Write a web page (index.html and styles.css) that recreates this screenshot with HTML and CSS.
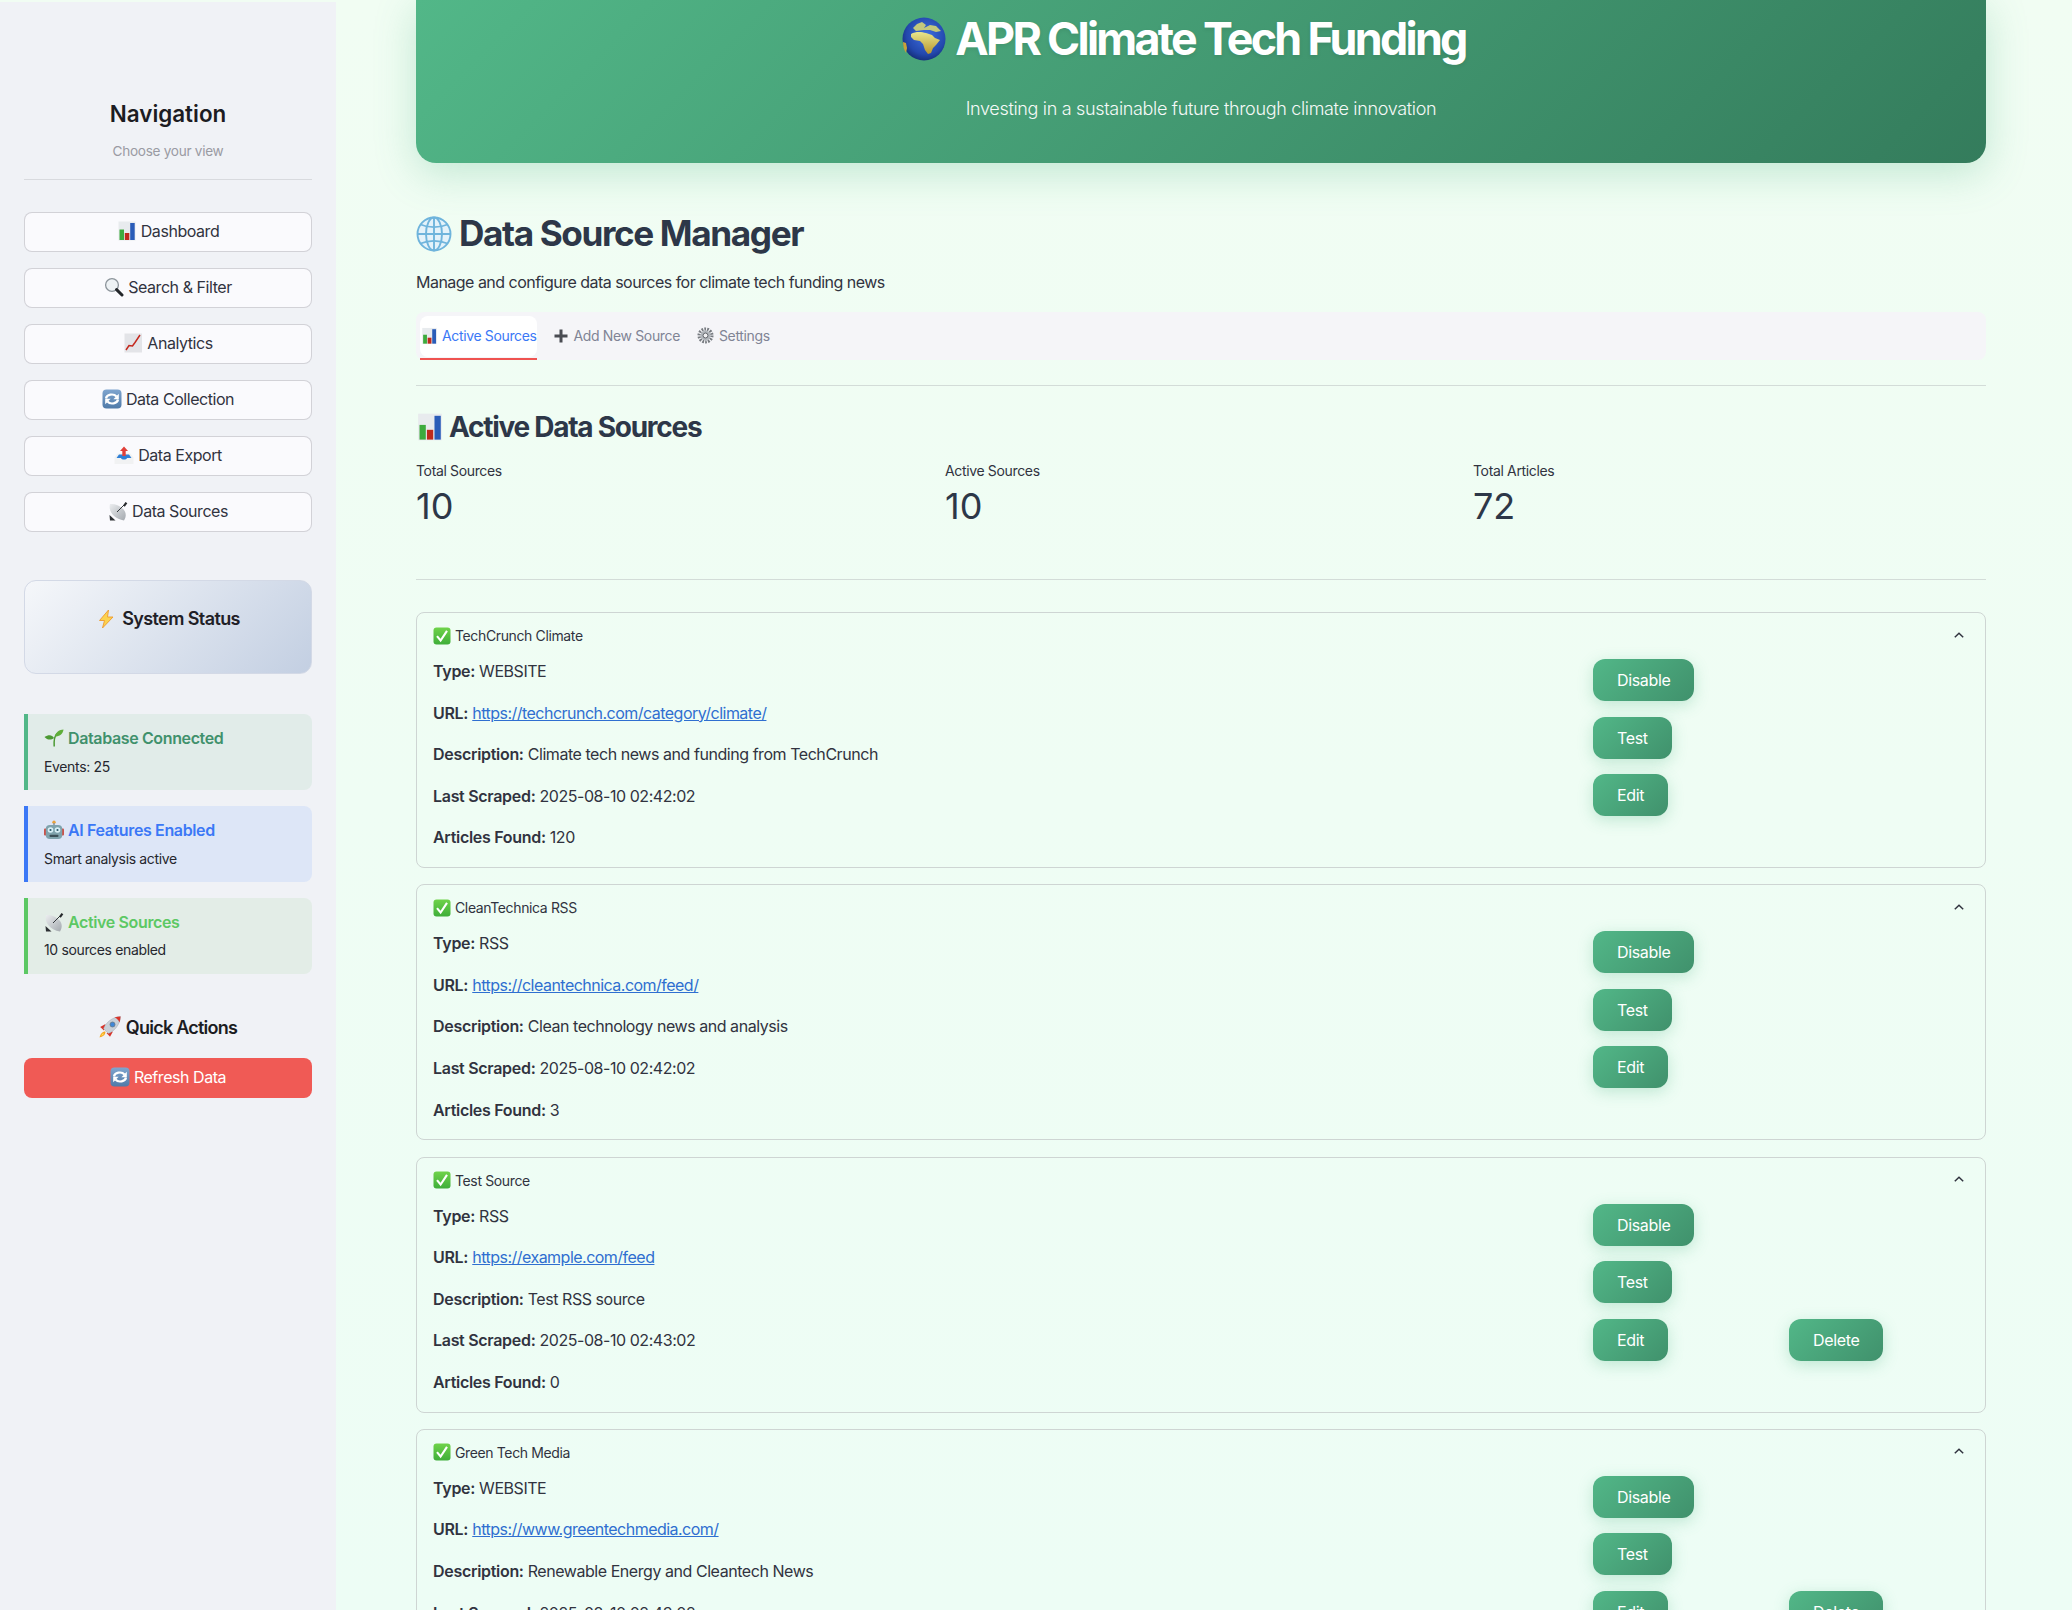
FILE: index.html
```html
<!DOCTYPE html>
<html lang="en">
<head>
<meta charset="utf-8">
<title>APR Climate Tech Funding</title>
<link rel="stylesheet" href="styles.css">
</head>
<body>
<svg class="defs" aria-hidden="true">
  <defs>
    <radialGradient id="sea" cx="0.55" cy="0.4" r="0.65"><stop offset="0" stop-color="#3f6fe0"/><stop offset="0.7" stop-color="#2348ad"/><stop offset="1" stop-color="#122a70"/></radialGradient>
    <linearGradient id="land" x1="0.5" y1="0" x2="0.5" y2="1"><stop offset="0" stop-color="#e8e68c"/><stop offset="1" stop-color="#b8962e"/></linearGradient>
    <linearGradient id="rf" x1="0" y1="0" x2="0" y2="1"><stop offset="0" stop-color="#7fa5cf"/><stop offset="1" stop-color="#4f7aa8"/></linearGradient>
    <linearGradient id="dish" x1="0" y1="0" x2="1" y2="1"><stop offset="0" stop-color="#eceef0"/><stop offset="1" stop-color="#a3a8ae"/></linearGradient>
    <linearGradient id="ok" x1="0" y1="0" x2="0" y2="1"><stop offset="0" stop-color="#6fd34a"/><stop offset="1" stop-color="#3fae3a"/></linearGradient>
  </defs>
  <symbol id="i-chart" viewBox="0 0 20 20"><rect x="1.500" y="0.500" width="17" height="19" fill="#e8ebee"/><rect x="2.500" y="8.500" width="4.500" height="10.500" fill="#3dab3d"/><rect x="7.800" y="12" width="4.500" height="7" fill="#bf2a1c"/><rect x="13.200" y="2" width="4.500" height="17" fill="#2a5cb8"/></symbol>
  <symbol id="i-search" viewBox="0 0 20 20"><circle cx="8" cy="8" r="6.400" fill="#eef2f5" stroke="#8c949b" stroke-width="1.300"/><line x1="12.600" y1="12.600" x2="18" y2="18" stroke="#23262a" stroke-width="3" stroke-linecap="round"/></symbol>
  <symbol id="i-up" viewBox="0 0 20 20"><rect x="1.500" y="0.500" width="17.500" height="19" fill="#e3e4e8"/><polyline points="3,17 6,12.500 9.500,13 12,9.500 17,2" fill="none" stroke="#c4281e" stroke-width="1.500"/></symbol>
  <symbol id="i-refresh" viewBox="0 0 20 20"><rect x="0.500" y="0.500" width="19" height="19" rx="4" fill="url(#rf)"/><path d="M4 9.500C4.500 5.500 11.500 4 14.500 7.500" fill="none" stroke="#fff" stroke-width="2.200"/><path d="M16.800 4.800v5.400h-5.400z" fill="#fff"/><path d="M16 10.500C15.500 14.500 8.500 16 5.500 12.500" fill="none" stroke="#fff" stroke-width="2.200"/><path d="M3.200 15.200v-5.400h5.400z" fill="#fff"/></symbol>
  <symbol id="i-out" viewBox="0 0 20 20"><path d="M0.500 12.500L3.500 8.500h13l3 4v6.500h-19z" fill="#f1f2f3"/><path d="M2.500 13L5 9.500h10l2.500 3.500h-4.500c-.5 2-5.500 2-6 0z" fill="#2f7fd6"/><path d="M10 1.500L14 6h-2.300v5h-3.400v-5h-2.300z" fill="#e0403a"/></symbol>
  <symbol id="i-sat" viewBox="0 0 20 20"><path d="M1.500 14l6 5.500H2z" fill="#2c2f33"/><path d="M2 3C0 10 6 18 16 19.500 19 15 18 10 14 7 10 3.500 6 2.500 2 3z" fill="url(#dish)"/><path d="M9 11L16 4" stroke="#33373b" stroke-width="1"/><path d="M15 4.500l2.500-3.500 1.800 1.300-2.500 3.500z" fill="#26292c"/></symbol>
  <symbol id="i-bolt" viewBox="0 0 20 20"><path d="M12.500 1L3.500 11.500h5L6.500 19l10.500-11h-5.500z" fill="#fbd24e" stroke="#ee9a2e" stroke-width="0.900" stroke-linejoin="round"/></symbol>
  <symbol id="i-seed" viewBox="0 0 20 20"><path d="M10.200 18.500C9.800 13 10.500 8 13 5.500" fill="none" stroke="#4c9a34" stroke-width="1.500"/><path d="M11 8.500C12 3.500 15.500 2 19.500 1.500 19 6 15.500 8.500 11 8.500z" fill="#5fae3a"/><path d="M10 10C8 6.500 4.500 6.500 0.500 9 3 12 7 12.500 10 10z" fill="#4c9a34"/></symbol>
  <symbol id="i-robot" viewBox="0 0 20 20"><circle cx="10" cy="2.200" r="1.700" fill="#e9a23b"/><rect x="9.200" y="3" width="1.600" height="3" fill="#8d989f"/><rect x="0" y="8.500" width="3" height="7" rx="1" fill="#c9524a"/><rect x="17" y="8.500" width="3" height="7" rx="1" fill="#c9524a"/><rect x="1.800" y="5" width="16.400" height="14" rx="4" fill="#7fa3ad"/><circle cx="6.500" cy="10" r="2.800" fill="#d8f0f7"/><circle cx="13.500" cy="10" r="2.800" fill="#d8f0f7"/><circle cx="6.500" cy="10" r="1.100" fill="#2d5a6a"/><circle cx="13.500" cy="10" r="1.100" fill="#2d5a6a"/><rect x="5.500" y="14.800" width="9" height="2.200" rx="1" fill="#3c5058"/></symbol>
  <symbol id="i-rocket" viewBox="0 0 22 22"><path d="M6.500 15.500C3 15.500 1.500 18 .5 21.500 4 20.500 6.500 19 6.500 15.500z" fill="#f6a623"/><path d="M4.800 17.200C3.300 17.300 2.500 18.500 2.200 19.800 3.500 19.500 4.700 18.700 4.800 17.200z" fill="#fde35a"/><path d="M6.500 8L1.200 11 5 14.500z" fill="#d8342a"/><path d="M14 15.500L11 20.800 7.500 17z" fill="#d8342a"/><path d="M4.500 12.500L9.500 17.500C15.500 15 20.800 9 21.500 .5 13 1.200 7 6.500 4.500 12.500z" fill="#c9d0d8" stroke="#8f98a2" stroke-width="0.400"/><path d="M15.500 1.500C18 2.500 19.500 4 20.500 6.500 21.200 4.500 21.400 2.500 21.500 .5 19.500 .6 17.500 .9 15.500 1.500z" fill="#d8342a"/><circle cx="13.500" cy="8.500" r="2.500" fill="#3f87d8" stroke="#6a7782" stroke-width="0.800"/></symbol>
  <symbol id="i-check" viewBox="0 0 18 18"><rect x="0.500" y="0.500" width="17" height="17" rx="3" fill="url(#ok)"/><path d="M4 9.200l3.600 4.300L14 3.800" fill="none" stroke="#fff" stroke-width="2.100"/></symbol>
  <symbol id="i-earth" viewBox="0 0 44 44"><circle cx="22" cy="22" r="21.500" fill="url(#sea)"/><path d="M11 11L15 7 20 5 24 8 22 11 28 8 34 9 39 14 34 15 28 13 22 13 14 14z" fill="#c4c87c"/><path d="M9 17C14 14 20 15 24 16L30 18 33 21 38 23 34 28 31 31 29 36 26 37 23 33 21 27 18 24 12 23 9 20z" fill="url(#land)"/><path d="M1 25L4 26 5 31 4 36C2 33 1 29 1 25z" fill="#c8a23a"/></symbol>
  <symbol id="i-globe" viewBox="0 0 36 36" fill="none" stroke="#6fb4dc" stroke-width="1.900"><circle cx="18" cy="18" r="16.500" fill="#e4f2fa"/><ellipse cx="18" cy="18" rx="8" ry="16.500"/><line x1="18" y1="1.500" x2="18" y2="34.500"/><line x1="1.500" y1="18" x2="34.500" y2="18"/><path d="M4.500 8.500c8 3.500 19 3.500 27 0M4.500 27.500c8-3.500 19-3.500 27 0"/></symbol>
  <symbol id="i-plus" viewBox="0 0 14 14"><path d="M5.500 0.500h3v5h5v3h-5v5h-3v-5h-5v-3h5z" fill="#4a4c52"/></symbol>
  <symbol id="i-gear" viewBox="0 0 18 18"><circle cx="9" cy="9" r="6.800" fill="none" stroke="#777b80" stroke-width="3.400" stroke-dasharray="1.800 1.200"/><circle cx="9" cy="9" r="5.200" fill="#b0b5ba"/><circle cx="9" cy="9" r="2.600" fill="#f0f1f3" stroke="#5b5f64" stroke-width="1"/></symbol>
  <symbol id="i-chev" viewBox="0 0 10 6"><polyline points="0.800,5.200 5,1.200 9.200,5.200" fill="none" stroke="#31333f" stroke-width="1.500"/></symbol>
</svg>

<div class="app">
  <aside class="sidebar">
    <h2 class="nav-title">Navigation</h2>
    <p class="nav-sub">Choose your view</p>
    <hr class="side-rule">
    <nav class="nav-list">
      <button class="nav-btn"><svg class="ic"><use href="#i-chart"/></svg>Dashboard</button>
      <button class="nav-btn"><svg class="ic"><use href="#i-search"/></svg>Search &amp; Filter</button>
      <button class="nav-btn"><svg class="ic"><use href="#i-up"/></svg>Analytics</button>
      <button class="nav-btn"><svg class="ic"><use href="#i-refresh"/></svg>Data Collection</button>
      <button class="nav-btn"><svg class="ic"><use href="#i-out"/></svg>Data Export</button>
      <button class="nav-btn"><svg class="ic"><use href="#i-sat"/></svg>Data Sources</button>
    </nav>
    <div class="system-box"><svg class="ic"><use href="#i-bolt"/></svg>System Status</div>
    <div class="status status-green">
      <div class="status-title"><svg class="ic"><use href="#i-seed"/></svg>Database Connected</div>
      <div class="status-text">Events: 25</div>
    </div>
    <div class="status status-blue">
      <div class="status-title"><svg class="ic"><use href="#i-robot"/></svg>AI Features Enabled</div>
      <div class="status-text">Smart analysis active</div>
    </div>
    <div class="status status-lime">
      <div class="status-title"><svg class="ic"><use href="#i-sat"/></svg>Active Sources</div>
      <div class="status-text">10 sources enabled</div>
    </div>
    <div class="quick-title"><svg class="ic ic-rocket"><use href="#i-rocket"/></svg>Quick Actions</div>
    <button class="refresh-btn"><svg class="ic"><use href="#i-refresh"/></svg>Refresh Data</button>
  </aside>

  <main class="main">
    <header class="hero">
      <h1 class="hero-title"><svg class="ic-earth"><use href="#i-earth"/></svg>APR Climate Tech Funding</h1>
      <p class="hero-sub">Investing in a sustainable future through climate innovation</p>
    </header>

    <h2 class="page-title"><svg class="ic-globe"><use href="#i-globe"/></svg>Data Source Manager</h2>
    <p class="page-sub">Manage and configure data sources for climate tech funding news</p>

    <div class="tabs">
      <div class="tab tab-active"><svg class="ic-tab"><use href="#i-chart"/></svg>Active Sources</div>
      <div class="tab"><svg class="ic-plus"><use href="#i-plus"/></svg>Add New Source</div>
      <div class="tab"><svg class="ic-gear"><use href="#i-gear"/></svg>Settings</div>
    </div>

    <hr class="rule rule-tabs">

    <h3 class="section-title"><svg class="ic-section"><use href="#i-chart"/></svg>Active Data Sources</h3>

    <div class="metrics">
      <div class="metric"><div class="metric-label">Total Sources</div><div class="metric-value">10</div></div>
      <div class="metric"><div class="metric-label">Active Sources</div><div class="metric-value">10</div></div>
      <div class="metric"><div class="metric-label">Total Articles</div><div class="metric-value">72</div></div>
    </div>

    <hr class="rule rule-metrics">

    <section class="source">
      <div class="source-head"><svg class="ic-check"><use href="#i-check"/></svg><span class="source-name">TechCrunch Climate</span><svg class="chev"><use href="#i-chev"/></svg></div>
      <div class="source-body">
        <div class="source-info">
          <p><b>Type:</b> WEBSITE</p>
          <p><b>URL:</b> <a href="#">https://techcrunch.com/category/climate/</a></p>
          <p><b>Description:</b> Climate tech news and funding from TechCrunch</p>
          <p><b>Last Scraped:</b> 2025-08-10 02:42:02</p>
          <p><b>Articles Found:</b> 120</p>
        </div>
        <div class="source-actions">
          <button class="act act-1">Disable</button>
          <button class="act act-2">Test</button>
          <button class="act act-3">Edit</button>
        </div>
      </div>
    </section>

    <section class="source">
      <div class="source-head"><svg class="ic-check"><use href="#i-check"/></svg><span class="source-name">CleanTechnica RSS</span><svg class="chev"><use href="#i-chev"/></svg></div>
      <div class="source-body">
        <div class="source-info">
          <p><b>Type:</b> RSS</p>
          <p><b>URL:</b> <a href="#">https://cleantechnica.com/feed/</a></p>
          <p><b>Description:</b> Clean technology news and analysis</p>
          <p><b>Last Scraped:</b> 2025-08-10 02:42:02</p>
          <p><b>Articles Found:</b> 3</p>
        </div>
        <div class="source-actions">
          <button class="act act-1">Disable</button>
          <button class="act act-2">Test</button>
          <button class="act act-3">Edit</button>
        </div>
      </div>
    </section>

    <section class="source">
      <div class="source-head"><svg class="ic-check"><use href="#i-check"/></svg><span class="source-name">Test Source</span><svg class="chev"><use href="#i-chev"/></svg></div>
      <div class="source-body">
        <div class="source-info">
          <p><b>Type:</b> RSS</p>
          <p><b>URL:</b> <a href="#">https://example.com/feed</a></p>
          <p><b>Description:</b> Test RSS source</p>
          <p><b>Last Scraped:</b> 2025-08-10 02:43:02</p>
          <p><b>Articles Found:</b> 0</p>
        </div>
        <div class="source-actions">
          <button class="act act-1">Disable</button>
          <button class="act act-2">Test</button>
          <button class="act act-3">Edit</button>
          <button class="act act-del">Delete</button>
        </div>
      </div>
    </section>

    <section class="source">
      <div class="source-head"><svg class="ic-check"><use href="#i-check"/></svg><span class="source-name">Green Tech Media</span><svg class="chev"><use href="#i-chev"/></svg></div>
      <div class="source-body">
        <div class="source-info">
          <p><b>Type:</b> WEBSITE</p>
          <p><b>URL:</b> <a href="#">https://www.greentechmedia.com/</a></p>
          <p><b>Description:</b> Renewable Energy and Cleantech News</p>
          <p><b>Last Scraped:</b> 2025-08-10 02:43:02</p>
          <p><b>Articles Found:</b> 0</p>
        </div>
        <div class="source-actions">
          <button class="act act-1">Disable</button>
          <button class="act act-2">Test</button>
          <button class="act act-3">Edit</button>
          <button class="act act-del">Delete</button>
        </div>
      </div>
    </section>
  </main>
</div>
</body>
</html>
```

FILE: styles.css
```css
* { box-sizing: border-box; }
html, body { margin: 0; height: 1610px; overflow: hidden; }
body {
  font-family: Inter, "Noto Sans", sans-serif;
  color: #31333f;
  background: linear-gradient(180deg, #f1fdf3 0%, #edfdf5 100%);
}
.defs { position: absolute; width: 0; height: 0; }
.app { display: flex; height: 1610px; align-items: stretch; }

/* Sidebar */
.sidebar {
  flex: 0 0 336px;
  margin-top: 2px;
  padding: 97px 24px 0;
  background: #f0f2f6;
}
.ic { width: 20px; height: 20px; vertical-align: -4px; margin-right: 4px; }
.nav-title { margin: 0; font-size: 22.4px; line-height: 30px; font-weight: 600; color: #1c1c22; text-align: center; }
.nav-sub { margin: 12px 0 0; font-size: 13.6px; line-height: 20px; letter-spacing: -.28px; color: #9a9ba3; text-align: center; }
.side-rule { margin: 18px 0 0; border: 0; height: 1px; background: #d8dade; }
.nav-list { display: flex; flex-direction: column; gap: 16px; margin-top: 32px; }
.nav-btn {
  height: 40px;
  border: 1px solid rgba(49, 51, 63, .2);
  border-radius: 8px;
  background: #fafafd;
  font: 400 16px Inter, sans-serif;
  letter-spacing: -.45px;
  color: #31333f;
  padding: 0 0 2px;
}
.system-box {
  margin-top: 48px;
  height: 94px;
  padding-top: 25px;
  border: 1px solid #d3d9e6;
  border-radius: 12px;
  background: linear-gradient(135deg, #f5f7fa 0%, #c3cfe2 100%);
  text-align: center;
  font-size: 18px;
  line-height: 26px;
  font-weight: 600;
  letter-spacing: -.6px;
  color: #1f2026;
}
.system-box .ic { margin-right: 6px; }
.status {
  height: 76px;
  margin-top: 16px;
  padding: 12px 16px;
  border-left: 4px solid;
  border-radius: 0 8px 8px 0;
}
.system-box + .status { margin-top: 40px; }
.status-green { background: #e1ece9; border-color: #52b788; color: #40916c; }
.status-blue { background: #dde6f7; border-color: #3b78f6; color: #3b78f6; }
.status-lime { background: #e3ede7; border-color: #5cc864; color: #5cc864; }
.status-title { font-size: 16px; line-height: 24px; font-weight: 600; letter-spacing: -.37px; }
.status-text { margin-top: 7px; font-size: 14px; line-height: 20px; letter-spacing: -.35px; color: #26272e; }
.status-lime .status-text { margin-top: 6px; }
.quick-title { margin-top: 40px; text-align: center; font-size: 18px; line-height: 28px; font-weight: 600; letter-spacing: -.76px; color: #1c1c22; }
.ic-rocket { width: 22px; height: 22px; vertical-align: -4px; margin-right: 5px; }
.refresh-btn {
  display: block;
  width: 100%;
  height: 40px;
  margin-top: 16px;
  padding: 0 0 2px;
  border: 0;
  border-radius: 8px;
  background: #f05a55;
  color: #fff;
  font: 400 16px Inter, sans-serif;
  letter-spacing: -.45px;
}

/* Main */
.main { flex: 1 1 auto; min-width: 0; padding: 0 86px 0 80px; }
.hero {
  height: 163px;
  border-radius: 0 0 20px 20px;
  background: linear-gradient(135deg, #52b788 0%, #347c5c 100%);
  box-shadow: 0 10px 40px rgba(82, 183, 136, .3);
  color: #fff;
  text-align: center;
  padding-top: 11px;
}
.hero-title {
  margin: 0;
  padding-right: 34px;
  font-size: 44.8px;
  line-height: 56px;
  font-weight: 700;
  letter-spacing: -2.7px;
  text-shadow: 0 2px 4px rgba(0, 0, 0, .08);
}
.ic-earth { width: 44px; height: 44px; vertical-align: -6px; margin-right: 9px; }
.hero-sub { margin: 28px 0 0; font-size: 18px; line-height: 28px; font-weight: 300; letter-spacing: -.33px; opacity: .95; }
.page-title { margin: 48px 0 0; font-size: 35.2px; line-height: 44px; font-weight: 700; letter-spacing: -1.4px; color: #2d3748; }
.ic-globe { width: 36px; height: 36px; vertical-align: -6px; margin-right: 7px; }
.page-sub { margin: 14px 0 0; font-size: 16px; line-height: 26px; letter-spacing: -.52px; color: #31333f; }

.tabs {
  display: flex;
  gap: 17px;
  height: 48px;
  margin-top: 17px;
  padding: 4px 0 0 4px;
  border-radius: 8px;
  background: #f5f5f8;
}
.tab {
  display: flex;
  align-items: center;
  height: 41px;
  padding-bottom: 2px;
  font-size: 14px;
  letter-spacing: -.36px;
  color: #808495;
}
.tab-active {
  position: relative;
  padding-left: 1px;
  border-radius: 8px;
  background: #fff;
  color: #3b78f6;
}
.tab-active::after {
  content: "";
  position: absolute;
  left: 0;
  right: 0;
  bottom: -3px;
  height: 2px;
  background: #ef5350;
}
.ic-tab { width: 17px; height: 18px; margin-right: 4px; }
.ic-plus { width: 14px; height: 14px; margin-right: 6px; }
.ic-gear { width: 17px; height: 17px; margin-right: 5px; }

.rule { border: 0; height: 1px; background: #d3dcd8; margin: 0; }
.rule-tabs { margin-top: 25px; }
.section-title { margin: 23px 0 0; font-size: 28px; line-height: 36px; font-weight: 700; letter-spacing: -1.27px; color: #2d3748; }
.ic-section { width: 28px; height: 28px; vertical-align: -4px; margin-right: 5px; }

.metrics { display: grid; grid-template-columns: 529px 528px 1fr; margin-top: 17px; }
.metric-label { font-size: 14px; line-height: 18px; letter-spacing: -.35px; color: #31333f; }
.metric-value { margin-top: 4px; font-size: 36px; line-height: 44px; font-weight: 400; color: #2d3748; }
.rule-metrics { margin-top: 51px; }

.source {
  height: 256px;
  margin-top: 16.3px;
  border: 1px solid #ced5d3;
  border-radius: 8px;
}
.rule-metrics + .source { margin-top: 32px; }
.source-head { display: flex; align-items: center; height: 45px; padding: 0 16px; }
.ic-check { width: 18px; height: 18px; margin-right: 4px; flex: none; }
.source-name { flex: 1; font-size: 14px; letter-spacing: -.37px; color: #31333f; }
.chev { width: 10px; height: 6px; flex: none; margin: 0 5px 2px 0; }
.source-body {
  display: grid;
  grid-template-columns: 1160px 1fr;
  padding: 0 16px;
}
.source-info { padding-top: 1px; color: #31333f; font-size: 16px; line-height: 25.6px; letter-spacing: -.45px; }
.source-info p { margin: 0 0 16px; }
.source-info b { font-weight: 600; letter-spacing: -.3px; }
.source-info a { color: #2f6fd0; letter-spacing: -.52px; }
.source-actions {
  display: grid;
  grid-template-columns: 196px auto;
  justify-content: start;
  justify-items: start;
  row-gap: 15.6px;
  padding-top: 1px;
  align-content: start;
}
.act {
  grid-column: 1;
  height: 42px;
  padding: 0 24px;
  border: 0;
  border-radius: 12px;
  background: linear-gradient(135deg, #52b788 0%, #40916c 100%);
  box-shadow: 0 4px 15px rgba(82, 183, 136, .3);
  color: #fff;
  font: 400 16px Inter, sans-serif;
  letter-spacing: -.35px;
}
.act-del { grid-column: 2; grid-row: 3; }
```
